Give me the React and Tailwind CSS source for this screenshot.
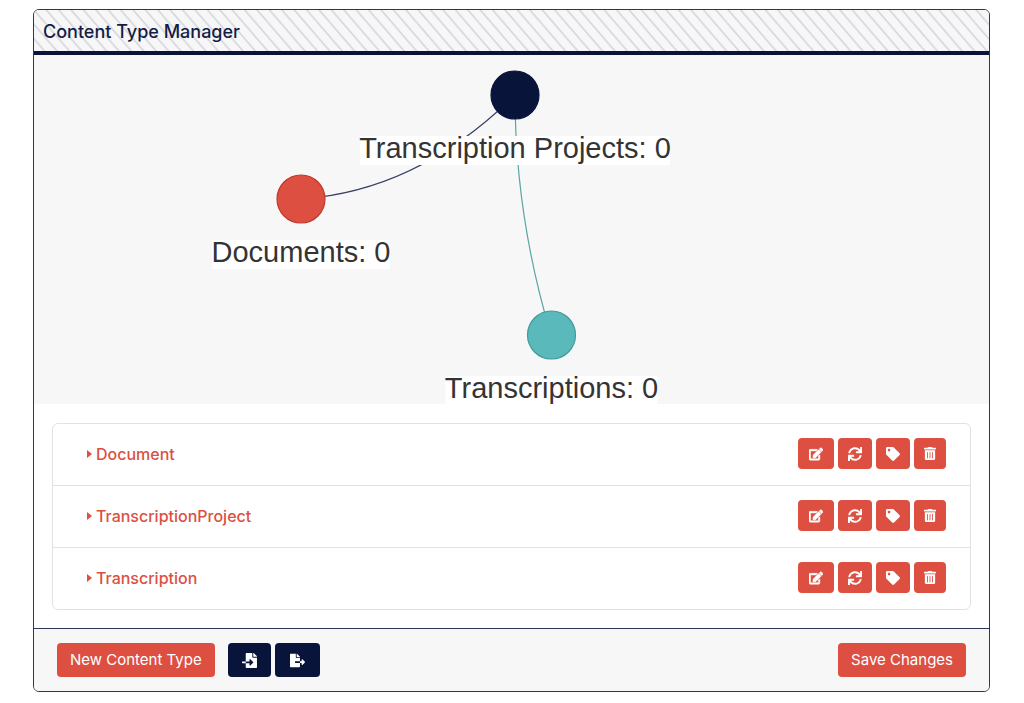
import { FaEdit, FaTag, FaTrashAlt, FaFileImport, FaFileExport, FaSync } from "react-icons/fa";

const types = ["Document", "TranscriptionProject", "Transcription"];

const nodes = [
  { label: "Transcription Projects: 0", x: 481, y: 40, w: 310, fill: "#09143b", stroke: "#09143b" },
  { label: "Documents: 0", x: 267, y: 144, w: 178, fill: "#dc4f41", stroke: "#c0392b" },
  { label: "Transcriptions: 0", x: 517.5, y: 280, w: 212, fill: "#5ab9ba", stroke: "#419b9a" },
];

function Graph() {
  return (
    <svg viewBox="0 0 955 349" className="block w-full bg-[#f7f7f7]" role="img" aria-label="Content type relationships">
      <path d="M481 40Q384 136 267 144" fill="none" stroke="#3a4068" strokeWidth="1.2" />
      <path d="M481 40Q481 160 517 280" fill="none" stroke="#5aa5a3" strokeWidth="1.2" />
      {nodes.map((n) => (
        <g key={n.label}>
          <rect x={n.x - n.w / 2} y={n.y + 41} width={n.w} height="29" fill="#fff" />
          <circle cx={n.x} cy={n.y} r="24" fill={n.fill} stroke={n.stroke} strokeWidth="1.2" />
          <text x={n.x} y={n.y + 63} textAnchor="middle" fill="#343434" className="font-['Liberation_Sans',Arial,sans-serif] text-[29px]">
            {n.label}
          </text>
        </g>
      ))}
    </svg>
  );
}

const action = "flex h-[31px] items-center justify-center rounded bg-[#dc4f41] text-white";

function TypeRow({ name }) {
  return (
    <li className="flex h-[62px] items-center justify-between border-b border-[#e2e2e2] pr-6 pb-0.5 pl-[34px] last:h-[61px] last:border-b-0">
      <button type="button" className="flex items-center gap-1 text-base font-medium text-[#dc4f41]">
        <svg viewBox="0 0 5 9" className="h-[9px] w-[5px]" fill="currentColor" aria-hidden="true">
          <path d="M0 1L5 5L0 9Z" />
        </svg>
        {name}
      </button>
      <div className="flex gap-1 text-sm">
        <button type="button" aria-label={`Edit ${name}`} className={`${action} w-9`}>
          <FaEdit className="stroke-current" strokeWidth="20" />
        </button>
        <button type="button" aria-label={`Refresh ${name}`} className={`${action} w-[34px]`}><FaSync /></button>
        <button type="button" aria-label={`Label ${name}`} className={`${action} w-[34px]`}><FaTag /></button>
        <button type="button" aria-label={`Delete ${name}`} className={`${action} w-8`}>
          <FaTrashAlt className="h-[13px] w-3" preserveAspectRatio="none" />
        </button>
      </div>
    </li>
  );
}

export default function App() {
  return (
    <main className="min-h-screen bg-white pt-[9px] pr-[34px] pb-3 pl-[33px] font-[Inter,sans-serif]">
      <section className="overflow-hidden rounded-md border border-[#2f3559] bg-white">
        <header className="relative flex h-[45px] items-center border-b-4 border-[#09143b] bg-[#f7f7f7] px-[9px] pt-0.5">
          <svg className="absolute inset-0 size-full" aria-hidden="true">
            <defs>
              <pattern id="stripes" width="12.4" height="14.4" patternUnits="userSpaceOnUse">
                <path d="M-12.4 -14.4L24.8 28.8M0 -14.4L37.2 28.8M-24.8 -14.4L12.4 28.8" stroke="#d3d4dc" strokeWidth="1.5" />
              </pattern>
            </defs>
            <rect width="100%" height="100%" fill="url(#stripes)" />
          </svg>
          <h1 className="relative text-lg font-medium text-[#141d48]">Content Type Manager</h1>
        </header>
        <Graph />
        <div className="px-[18px] pt-[19px] pb-[18px]">
          <ul className="rounded-md border border-[#e2e2e2]">
            {types.map((t) => <TypeRow key={t} name={t} />)}
          </ul>
        </div>
        <footer className="flex items-center justify-between border-t border-[#2f3559] bg-[#f7f7f7] px-[23px] py-3.5 text-white">
          <div className="flex gap-1">
            <button type="button" className="mr-[9px] h-[34px] rounded bg-[#dc4f41] px-[13px] text-[15px]">New Content Type</button>
            <button type="button" aria-label="Import" className="flex w-[43px] items-center justify-center rounded bg-[#09143b] text-[15px]"><FaFileImport /></button>
            <button type="button" aria-label="Export" className="flex w-[45px] items-center justify-center rounded bg-[#09143b] text-[15px]"><FaFileExport /></button>
          </div>
          <button type="button" className="h-[34px] rounded bg-[#dc4f41] px-[13px] text-[15px]">Save Changes</button>
        </footer>
      </section>
    </main>
  );
}
